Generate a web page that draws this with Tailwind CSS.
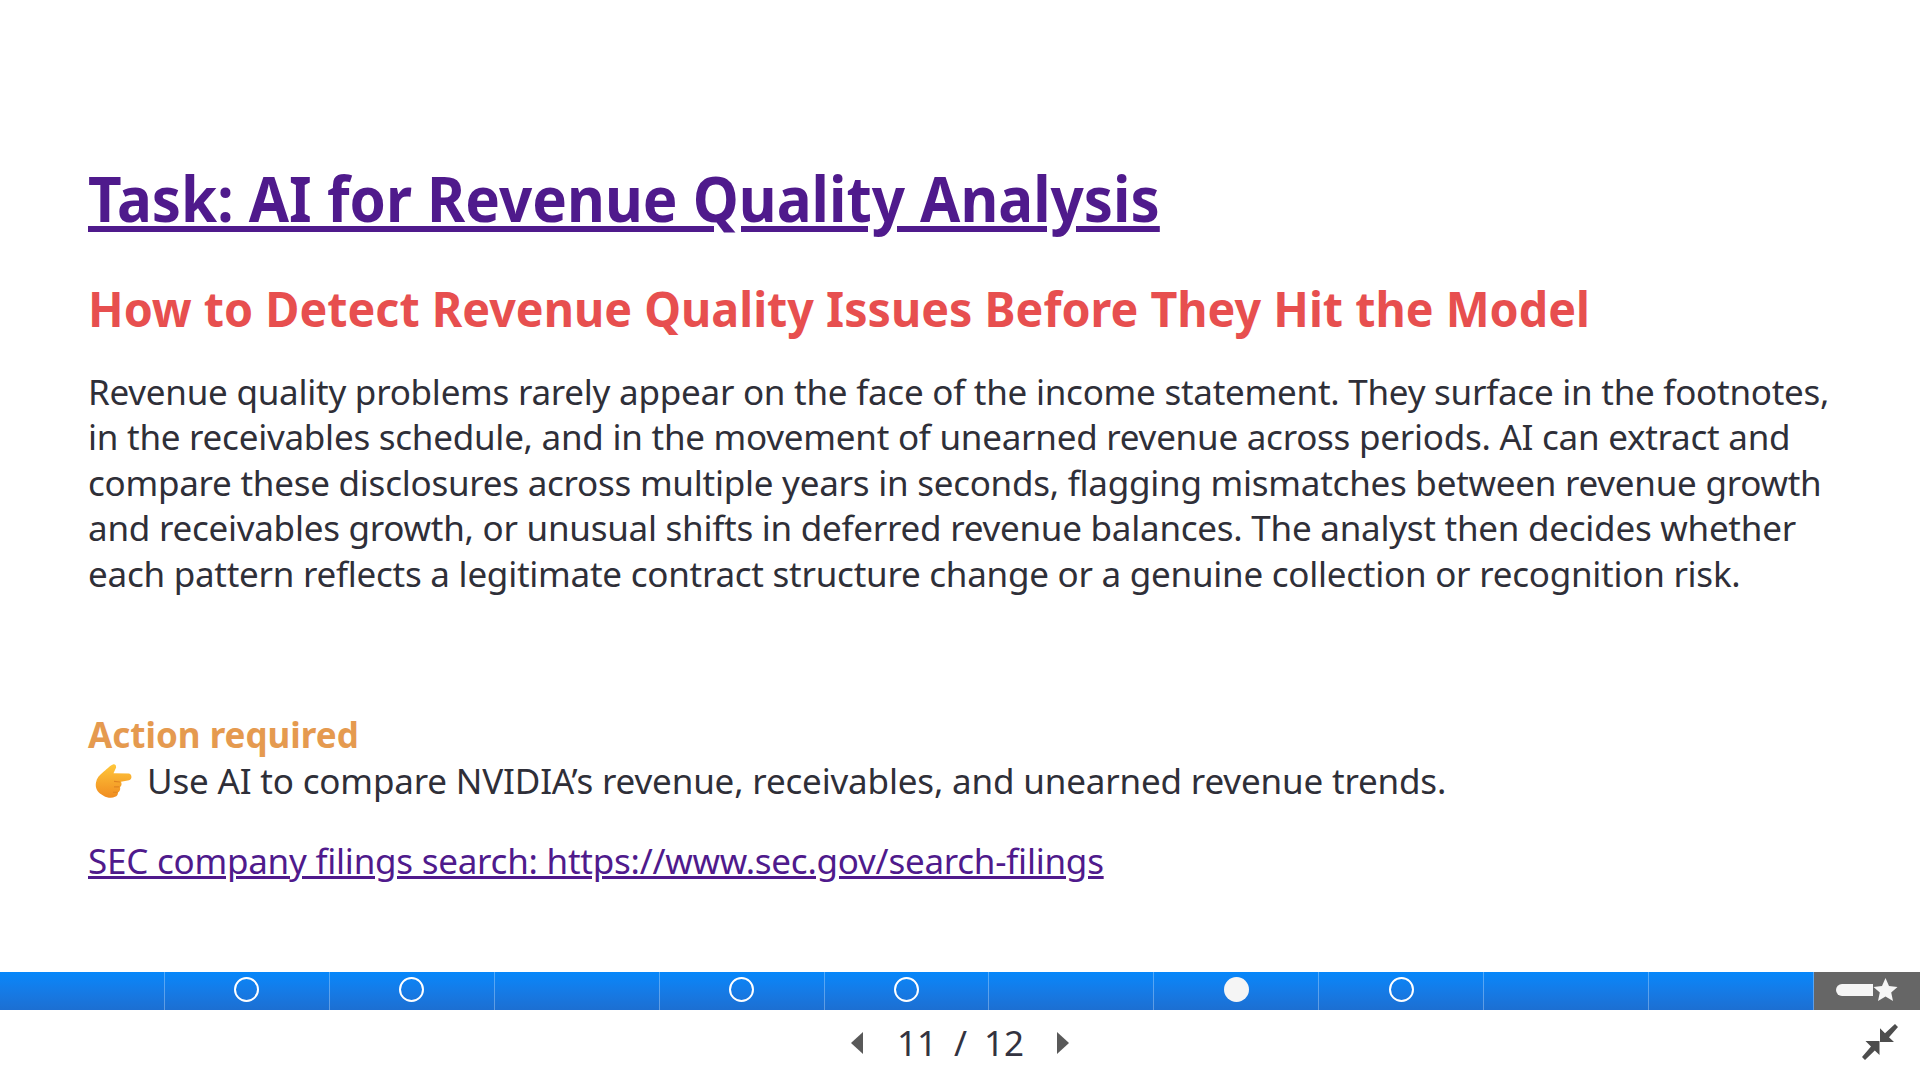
<!DOCTYPE html>
<html lang="en">
<head>
    <meta charset="UTF-8">
    <title>Task: AI for Revenue Quality Analysis</title>
    <script src="https://cdn.jsdelivr.net/npm/@tailwindcss/browser@4"></script>
</head>
<body class="bg-white h-[1080px] overflow-hidden flex flex-col font-['Noto_Sans',sans-serif]">
    <main class="h-[972px] pl-[88px] pr-[60px] pt-[154px]">
        <h1 class="origin-left scale-x-[0.925] whitespace-nowrap text-[63px] leading-[88px] font-bold text-[#4f1a8c] underline">Task: AI for Revenue Quality Analysis</h1>
        <h2 class="mt-[35px] origin-left scale-x-[0.971] whitespace-nowrap text-[48px] leading-[64px] font-bold text-[#e74f4f]">How to Detect Revenue Quality Issues Before They Hit the Model</h2>
        <p class="mt-[28px] text-[35px] leading-[45.4px] tracking-[-0.25px] text-[#2f2f38]">Revenue quality problems rarely appear on the face of the income statement. They surface in the footnotes, in the receivables schedule, and in the movement of unearned revenue across periods. AI can extract and compare these disclosures across multiple years in seconds, flagging mismatches between revenue growth and receivables growth, or unusual shifts in deferred revenue balances. The analyst then decides whether each pattern reflects a legitimate contract structure change or a genuine collection or recognition risk.</p>
        <p class="mt-[116px] text-[35px] leading-[45.5px] font-bold text-[#e59a4f]">Action required</p>
        <p class="flex items-center text-[35px] leading-[45.5px] tracking-[-0.17px] text-[#2f2f38]">
            <svg class="ml-[7px] mr-[14px] mt-[5px] w-[38px] h-[37px]" viewBox="0 0 38 34" preserveAspectRatio="none">
                <defs><linearGradient id="hand" x1="0" y1="0" x2="0" y2="1"><stop offset="0" stop-color="#ffc73a"/><stop offset="1" stop-color="#f08c20"/></linearGradient></defs>
                <path fill="url(#hand)" d="M18 .5c2-.8 3.500 1 3 3l-2.500 5 15.500.3c3 .3 3.500 5.700 0 6.200l-8 1.200c1 2 .5 4-1 5 .5 2 0 4-2 5 0 2-1 3.500-3 4-3 1.500-8 1-11.500-1C2 26 0 22 1 17c.5-4 3.500-7 7-9.500 3-2 7-6 10-7z"/>
                <path fill="none" stroke="#e08420" stroke-width="1" d="M19 16l6 .5M19 21l5.500 0M18 26l4.500 0"/>
            </svg>
            <span>Use AI to compare NVIDIA’s revenue, receivables, and unearned revenue trends.</span>
        </p>
        <a class="block mt-[35px] text-[35px] leading-[45.5px] tracking-[-0.24px] text-[#4f1a8c] underline">SEC company filings search: https://www.sec.gov/search-filings</a>
    </main>
    <div class="h-[38px] flex">
        <div class="flex-1 grid grid-cols-11 bg-gradient-to-b from-[#0587fb] to-[#1c6fd2]">
            <div class="border-r border-white/30"></div>
            <div class="border-r border-white/30 flex items-center justify-center pb-[3px]"><span class="w-[25px] h-[25px] rounded-full border-2 border-white"></span></div>
            <div class="border-r border-white/30 flex items-center justify-center pb-[3px]"><span class="w-[25px] h-[25px] rounded-full border-2 border-white"></span></div>
            <div class="border-r border-white/30"></div>
            <div class="border-r border-white/30 flex items-center justify-center pb-[3px]"><span class="w-[25px] h-[25px] rounded-full border-2 border-white"></span></div>
            <div class="border-r border-white/30 flex items-center justify-center pb-[3px]"><span class="w-[25px] h-[25px] rounded-full border-2 border-white"></span></div>
            <div class="border-r border-white/30"></div>
            <div class="border-r border-white/30 flex items-center justify-center pb-[3px]"><span class="w-[25px] h-[25px] rounded-full bg-[#f5f5f5]"></span></div>
            <div class="border-r border-white/30 flex items-center justify-center pb-[3px]"><span class="w-[25px] h-[25px] rounded-full border-2 border-white"></span></div>
            <div class="border-r border-white/30"></div>
            <div class="border-r border-white/30"></div>
        </div>
        <div class="w-[106px] bg-[#666666] flex items-center pl-[22px] pb-[2px]">
            <span class="w-[37px] h-[12px] rounded-l-full rounded-r-[2px] bg-[#f5f5f5]"></span>
            <svg class="w-[25px] h-[24px]" viewBox="0 0 24 24"><path fill="#f5f5f5" d="M12 0l3.500 8 8.500.9-6.300 5.700 1.800 8.400L12 18.600 4.500 23l1.800-8.400L0 8.900 8.500 8z"/></svg>
        </div>
    </div>
    <div class="flex-1 flex items-center justify-center relative pb-[5px]">
        <div class="flex items-center text-[#333340] text-[35px] leading-[45px]">
            <svg class="w-[12px] h-[22px] mr-[34px]" viewBox="0 0 12 22"><path fill="#595959" d="M12 0v22L0 11z"/></svg>
            <span class="w-[127px] flex justify-between"><span>11</span><span>/</span><span>12</span></span>
            <svg class="w-[12px] h-[22px] ml-[33px]" viewBox="0 0 12 22"><path fill="#595959" d="M0 0v22l12-11z"/></svg>
        </div>
        <svg class="absolute left-[1862px] top-[14px] w-[36px] h-[36px]" viewBox="0 0 36 36"><path fill="#4d4d4d" d="M18 4.300V18h14l-5-4.700L36 3l-3-3-10 9.300zM3.500 17h14v14l-4.700-4.500L3 36l-3-3 9-10.500z"/></svg>
    </div>
</body>
</html>
